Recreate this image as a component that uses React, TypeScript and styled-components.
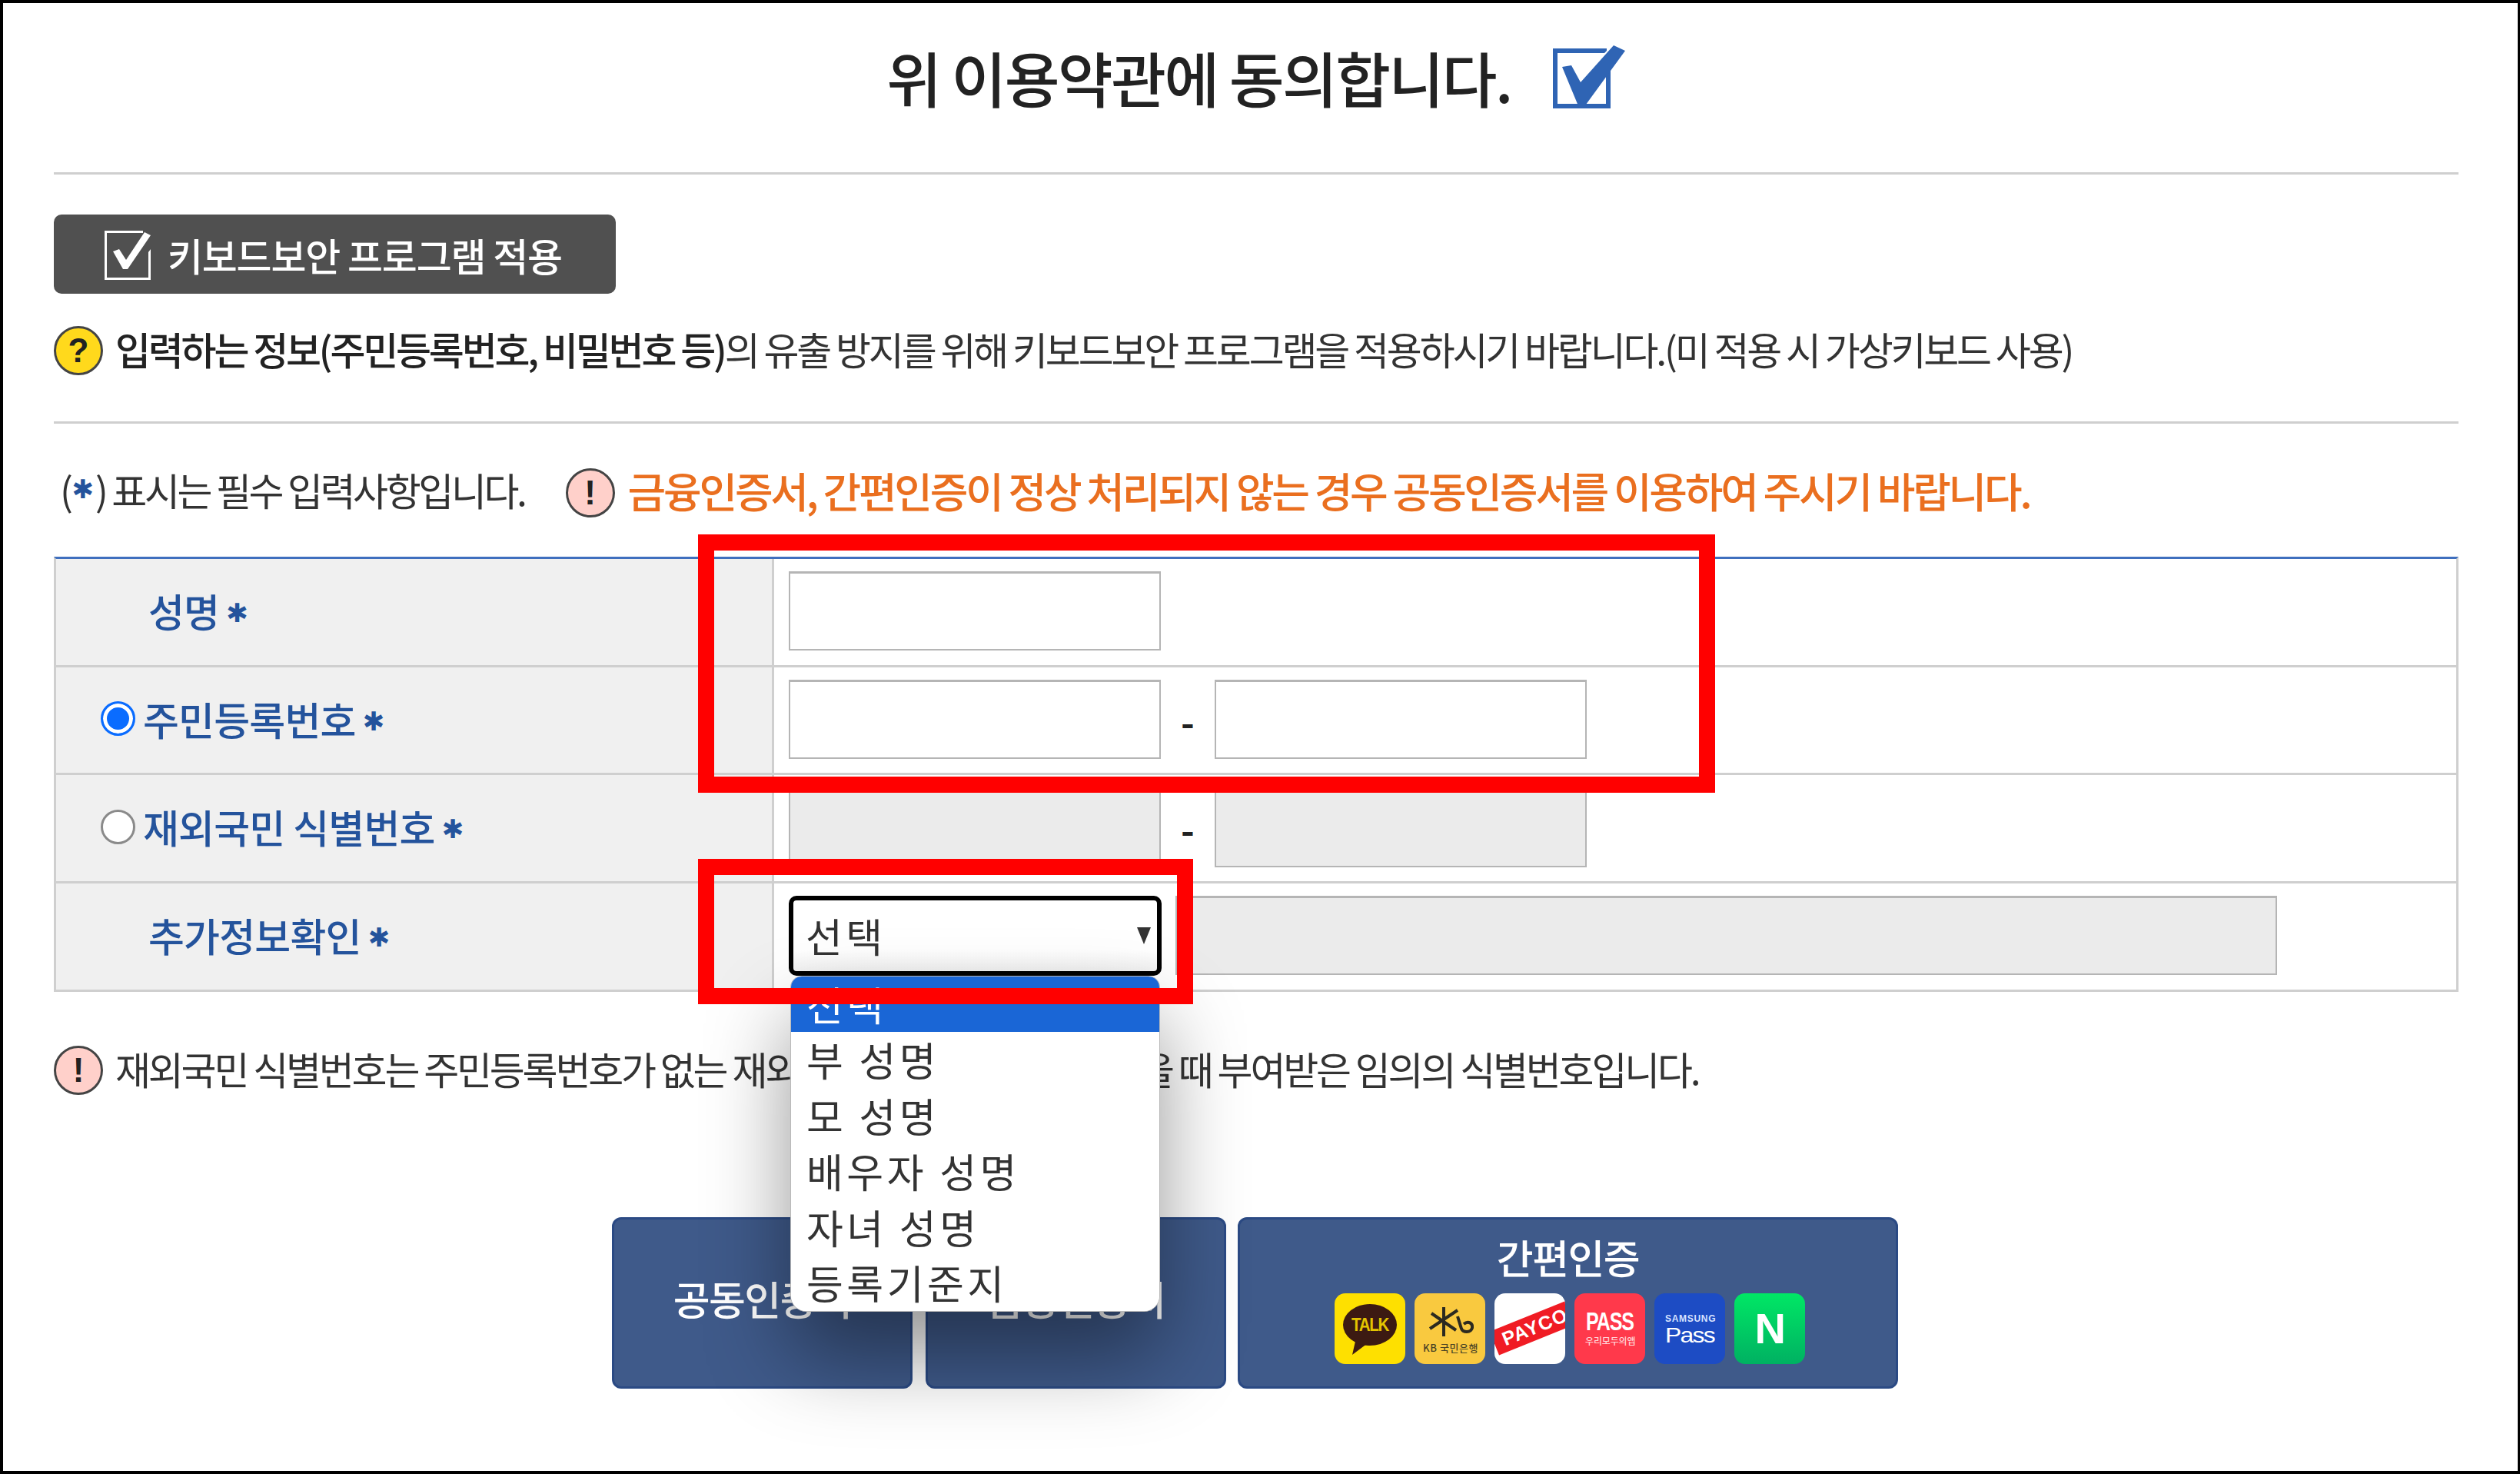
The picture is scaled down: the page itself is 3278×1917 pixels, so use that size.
import React from 'react';
import styled, { createGlobalStyle } from 'styled-components';

const FONT = `"Noto Sans CJK KR", "Noto Sans", sans-serif`;

const GlobalStyle = createGlobalStyle`
  html, body {
    margin: 0;
    padding: 0;
    background: #fff;
  }
  * {
    box-sizing: border-box;
  }
`;

const Frame = styled.div`
  position: relative;
  width: 3278px;
  height: 1917px;
  overflow: hidden;
  border: solid #000;
  border-width: 4px 3px 4px 4px;
  padding: 0 77px 0 66px;
  background: #fff;
  font-family: ${FONT};
  color: #333;
`;

const Header = styled.div`
  display: flex;
  align-items: center;
  justify-content: center;
  gap: 52px;
  height: 196px;
  margin: 0 0 24px 0;
`;

const Title = styled.h1`
  margin: 0 0 4px 0;
  font-size: 78px;
  font-weight: 500;
  letter-spacing: -2.5px;
  color: #222;
`;

const Divider = styled.div<{ $top: number }>`
  height: 3px;
  margin-top: ${(p) => p.$top}px;
  background: #cfcfcf;
`;

const KeyboardButton = styled.button`
  display: flex;
  align-items: center;
  gap: 18px;
  width: 731px;
  height: 103px;
  margin: 52px 0 0 0;
  padding: 0 0 0 64px;
  border: 0;
  border-radius: 10px;
  background: #505050;
  color: #fff;
  font-family: ${FONT};
  font-size: 50px;
  font-weight: 500;
  letter-spacing: -1.2px;
`;

const Notice = styled.div<{ $top: number; $gap?: number }>`
  display: flex;
  align-items: center;
  gap: ${(p) => p.$gap ?? 16}px;
  height: 64px;
  margin-top: ${(p) => p.$top}px;
  font-size: 50px;
  letter-spacing: -3.2px;
  white-space: nowrap;
`;

const NoticeText = styled.span`
  margin-bottom: 6px;
`;

const Strong = styled.span`
  font-weight: 500;
  color: #222;
`;

const Badge = styled.span<{ $tone: 'yellow' | 'pink' }>`
  display: flex;
  flex: none;
  align-items: center;
  justify-content: center;
  width: 64px;
  height: 64px;
  border: 3px solid #444;
  border-radius: 50%;
  background: ${(p) => (p.$tone === 'yellow' ? '#ffd91c' : '#ffd0ca')};
  color: #222;
  font-family: "Liberation Sans", sans-serif;
  font-size: 44px;
  font-weight: 700;
  letter-spacing: 0;
`;

const RequiredNote = styled.span`
  display: flex;
  align-items: center;
  margin: 0 36px 10px 8px;
  letter-spacing: -3.4px;
`;

const Star = styled.b`
  color: #24539c;
  font-family: "DejaVu Sans", sans-serif;
  font-weight: 700;
  letter-spacing: 0;
`;

const NoteStar = styled(Star)`
  margin: 0 2px;
  font-size: 34px;
`;

const OrangeText = styled.span`
  margin-bottom: 8px;
  color: #ea6f1f;
  font-size: 54px;
  font-weight: 500;
  letter-spacing: -3.25px;
`;

const Table = styled.div`
  margin-top: 51px;
  border: solid #cfcfcf;
  border-width: 3px 3px 0 3px;
  border-top-color: #3f6fbe;
`;

const Row = styled.div`
  display: grid;
  grid-template-columns: 934px 1fr;
  height: 140.7px;
  border-bottom: 3px solid #cfcfcf;
`;

const LabelCell = styled.div<{ $indent: number }>`
  display: flex;
  align-items: center;
  gap: 10px;
  padding: 0 0 4px ${(p) => p.$indent}px;
  background: #f0f0f0;
  border-right: 3px solid #cfcfcf;
  color: #24539c;
  font-size: 51px;
  font-weight: 500;
  letter-spacing: -0.8px;
`;

const LabelStar = styled(Star)`
  margin-left: -1px;
  padding-top: 6px;
  font-size: 34px;
`;

const Radio = styled.span<{ $checked?: boolean }>`
  flex: none;
  width: 45px;
  height: 45px;
  border-radius: 50%;
  border: 3px solid ${(p) => (p.$checked ? '#0a6cff' : '#8a8a8a')};
  background: ${(p) => (p.$checked ? '#0a6cff' : '#fff')};
  box-shadow: ${(p) => (p.$checked ? 'inset 0 0 0 5px #fff' : 'none')};
`;

const FieldCell = styled.div`
  display: flex;
  align-items: center;
  padding: 0 0 2px 19px;
`;

const TextInput = styled.input<{ $disabled?: boolean; $wide?: boolean }>`
  flex: none;
  width: ${(p) => (p.$wide ? '1433px' : '484px')};
  height: 103px;
  margin-left: ${(p) => (p.$wide ? '18px' : '0')};
  border: 2px solid #b5b5b5;
  border-top-width: 3px;
  background: ${(p) => (p.$disabled ? '#ebebeb' : '#fff')};
`;

const Dash = styled.span`
  flex: none;
  width: 70px;
  padding-top: 2px;
  text-align: center;
  color: #222;
  font-size: 48px;
  font-weight: 700;
`;

const SelectBox = styled.div`
  position: relative;
  flex: none;
  display: flex;
  align-items: center;
  justify-content: space-between;
  width: 485px;
  height: 104px;
  padding: 0 8px 0 16px;
  border: 6px solid #000;
  border-radius: 10px;
  background: linear-gradient(#fff 70%, #f1f1f1);
  color: #333;
  font-size: 52px;
  letter-spacing: 4.5px;
`;

const Caret = styled.span`
  width: 0;
  height: 0;
  border-style: solid;
  border-width: 22px 9px 0 9px;
  border-color: #333 transparent transparent transparent;
`;

const OptionList = styled.ul`
  position: absolute;
  z-index: 2;
  top: 99px;
  left: -3px;
  width: 479px;
  margin: 0;
  padding: 0;
  list-style: none;
  overflow: hidden;
  border-radius: 14px 14px 20px 20px;
  background: #fff;
  box-shadow: 0 0 0 1px #b9b9b9, 0 58px 110px rgba(0, 0, 0, 0.42);
`;

const Option = styled.li<{ $selected?: boolean }>`
  height: 72.5px;
  padding-left: 20px;
  background: ${(p) => (p.$selected ? '#1a66d6' : '#fff')};
  color: ${(p) => (p.$selected ? '#fff' : '#333')};
  font-size: 52px;
  line-height: 72px;
  letter-spacing: 4.5px;
`;

const ButtonRow = styled.div`
  display: flex;
  gap: 17px;
  margin: 159px 0 0 726px;
`;

const ActionButton = styled.button<{ $wide?: boolean }>`
  display: flex;
  flex-direction: column;
  align-items: center;
  justify-content: center;
  gap: 10px;
  width: ${(p) => (p.$wide ? '859px' : '391px')};
  height: 223px;
  margin-left: ${(p) => (p.$wide ? '-2px' : '0')};
  padding: 0 0 ${(p) => (p.$wide ? '18px' : '12px')} 0;
  border: 3px solid #2b4a84;
  border-radius: 12px;
  background: #3f5a8a;
  color: #fff;
  font-family: ${FONT};
  font-size: 52px;
  font-weight: 500;
  letter-spacing: -1.5px;
`;

const LogoRow = styled.div`
  display: flex;
  gap: 12px;
  margin-left: 4px;
`;

const LogoSvg = styled.svg`
  display: block;
  width: 92px;
  height: 92px;
  border-radius: 14px;
`;

const Highlight = styled.div<{ $left: number; $top: number; $width: number; $height: number }>`
  position: absolute;
  z-index: 3;
  left: ${(p) => p.$left}px;
  top: ${(p) => p.$top}px;
  width: ${(p) => p.$width}px;
  height: ${(p) => p.$height}px;
  border: 21px solid #ff0000;
  pointer-events: none;
`;

const AgreeCheck = () => (
  <svg width="97" height="90" viewBox="0 0 97 90">
    <path d="M2 6h70v3l-3 3H8v66h63V38l6-11v57H2z" fill="#2f64b4" />
    <path d="M14 30l12-2 12 22L81 2l15 7-54 74h-6z" fill="#2f64b4" />
  </svg>
);

const WhiteCheck = () => (
  <svg width="66" height="66" viewBox="0 0 66 66" style={{ flex: 'none' }}>
    <path d="M2 2h50v3H5v58h54V30l3-4v40H2z" fill="#fff" />
    <path d="M13 29l8-3 9 14 24-36 8 4-30 44h-6z" fill="#fff" />
  </svg>
);

const LogoKakao = () => (
  <LogoSvg viewBox="0 0 92 92">
    <rect width="92" height="92" fill="#fee000" />
    <path d="M28 58l-5 22 20-15z" fill="#3c1a12" />
    <ellipse cx="46" cy="41" rx="35" ry="27" fill="#3c1a12" />
    <text x="46" y="49" textAnchor="middle" fontFamily="Liberation Sans" fontSize="23" fontWeight="700" fill="#e3c400" textLength="48" lengthAdjust="spacingAndGlyphs">
      TALK
    </text>
  </LogoSvg>
);

const LogoKb = () => (
  <LogoSvg viewBox="0 0 92 92">
    <rect width="92" height="92" fill="#f9c93f" />
    <path d="M38 18v38M22 26l32 22M20 46l36-24" stroke="#2c2a20" strokeWidth="4" fill="none" />
    <path d="M56 30l5 16c2 5 12 6 14-1 1-6-5-10-11-5" stroke="#2c2a20" strokeWidth="4" fill="none" />
    <text x="46" y="76" textAnchor="middle" fontFamily="Noto Sans CJK KR" fontSize="13" fontWeight="500" fill="#4a4426" textLength="70">
      KB 국민은행
    </text>
  </LogoSvg>
);

const LogoPayco = () => (
  <LogoSvg viewBox="0 0 92 92">
    <rect width="92" height="92" fill="#fff" />
    <g transform="rotate(-22 46 46)">
      <rect x="-4" y="30" width="120" height="33" fill="#f01c24" />
      <text x="8" y="55" fontFamily="Liberation Sans" fontSize="25" fontWeight="700" fill="#fff" letterSpacing="1">
        PAYCO
      </text>
    </g>
  </LogoSvg>
);

const LogoPass = () => (
  <LogoSvg viewBox="0 0 92 92">
    <rect width="92" height="92" fill="#ff394b" />
    <text x="46" y="48" textAnchor="middle" fontFamily="Liberation Sans" fontSize="34" fontWeight="700" fill="#fff" textLength="62" lengthAdjust="spacingAndGlyphs">
      PASS
    </text>
    <text x="46" y="67" textAnchor="middle" fontFamily="Noto Sans CJK KR" fontSize="12" fill="#ffd5d8" textLength="64">
      우리모두의앱
    </text>
  </LogoSvg>
);

const LogoSamsung = () => (
  <LogoSvg viewBox="0 0 92 92">
    <rect width="92" height="92" fill="#1d4cc4" />
    <text x="46" y="37" textAnchor="middle" fontFamily="Liberation Sans" fontSize="12" fontWeight="700" fill="#d8e2ff" textLength="64">
      SAMSUNG
    </text>
    <text x="46" y="64" textAnchor="middle" fontFamily="Liberation Sans" fontSize="28" fill="#fff" textLength="64" lengthAdjust="spacingAndGlyphs">
      Pass
    </text>
  </LogoSvg>
);

const LogoNaver = () => (
  <LogoSvg viewBox="0 0 92 92">
    <defs>
      <linearGradient id="naverGreen" x1="0" y1="0" x2="0" y2="1">
        <stop offset="0" stopColor="#00e765" />
        <stop offset="1" stopColor="#00b162" />
      </linearGradient>
    </defs>
    <rect width="92" height="92" fill="url(#naverGreen)" />
    <text x="46" y="65" textAnchor="middle" fontFamily="Liberation Sans" fontSize="56" fontWeight="700" fill="#fff">
      N
    </text>
  </LogoSvg>
);

const options = ['선택', '부 성명', '모 성명', '배우자 성명', '자녀 성명', '등록기준지'];

const App = () => {
  return (
    <Frame>
      <GlobalStyle />
      <Header>
        <Title>위 이용약관에 동의합니다.</Title>
        <AgreeCheck />
      </Header>
      <Divider $top={0} />

      <KeyboardButton>
        <WhiteCheck />
        키보드보안 프로그램 적용
      </KeyboardButton>

      <Notice $top={42}>
        <Badge $tone="yellow">?</Badge>
        <NoticeText>
          <Strong>입력하는 정보(주민등록번호, 비밀번호 등)</Strong>의 유출 방지를 위해 키보드보안 프로그램을 적용하시기 바랍니다.(미 적용 시 가상키보드 사용)
        </NoticeText>
      </Notice>
      <Divider $top={60} />

      <Notice $top={58} $gap={17}>
        <RequiredNote>
          (<NoteStar>✱</NoteStar>) 표시는 필수 입력사항입니다.
        </RequiredNote>
        <Badge $tone="pink">!</Badge>
        <OrangeText>금융인증서, 간편인증이 정상 처리되지 않는 경우 공동인증서를 이용하여 주시기 바랍니다.</OrangeText>
      </Notice>

      <Table>
        <Row>
          <LabelCell $indent={120}>
            성명<LabelStar>✱</LabelStar>
          </LabelCell>
          <FieldCell>
            <TextInput />
          </FieldCell>
        </Row>
        <Row>
          <LabelCell $indent={58}>
            <Radio $checked />
            주민등록번호<LabelStar>✱</LabelStar>
          </LabelCell>
          <FieldCell>
            <TextInput />
            <Dash>-</Dash>
            <TextInput />
          </FieldCell>
        </Row>
        <Row>
          <LabelCell $indent={58}>
            <Radio />
            재외국민 식별번호<LabelStar>✱</LabelStar>
          </LabelCell>
          <FieldCell>
            <TextInput $disabled />
            <Dash>-</Dash>
            <TextInput $disabled />
          </FieldCell>
        </Row>
        <Row>
          <LabelCell $indent={120}>
            추가정보확인<LabelStar>✱</LabelStar>
          </LabelCell>
          <FieldCell>
            <SelectBox>
              선택
              <Caret />
              <OptionList>
                {options.map((option, i) => (
                  <Option key={option} $selected={i === 0}>
                    {option}
                  </Option>
                ))}
              </OptionList>
            </SelectBox>
            <TextInput $disabled $wide />
          </FieldCell>
        </Row>
      </Table>

      <Notice $top={70}>
        <Badge $tone="pink">!</Badge>
        <NoticeText>재외국민 식별번호는 주민등록번호가 없는 재외국민이 금융기관 거래했을 때 부여받은 임의의 식별번호입니다.</NoticeText>
      </Notice>

      <ButtonRow>
        <ActionButton>공동인증서</ActionButton>
        <ActionButton>금융인증서</ActionButton>
        <ActionButton $wide>
          간편인증
          <LogoRow>
            <LogoKakao />
            <LogoKb />
            <LogoPayco />
            <LogoPass />
            <LogoSamsung />
            <LogoNaver />
          </LogoRow>
        </ActionButton>
      </ButtonRow>

      <Highlight $left={904} $top={691} $width={1323} $height={336} />
      <Highlight $left={904} $top={1113} $width={644} $height={189} />
    </Frame>
  );
};

export default App;
